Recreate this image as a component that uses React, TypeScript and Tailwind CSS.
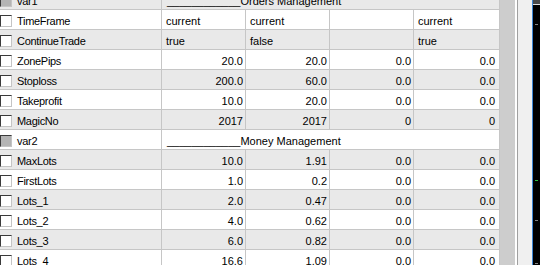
type Row =
    | { kind: "header"; name: string; title: string; shade: boolean }
    | { kind: "text" | "num"; name: string; values: string[]; shade: boolean };

const rows: Row[] = [
    { kind: "header", name: "var1", title: "____________Orders Management", shade: true },
    { kind: "text", name: "TimeFrame", values: ["current", "current", "", "current"], shade: false },
    { kind: "text", name: "ContinueTrade", values: ["true", "false", "", "true"], shade: true },
    { kind: "num", name: "ZonePips", values: ["20.0", "20.0", "0.0", "0.0"], shade: false },
    { kind: "num", name: "Stoploss", values: ["200.0", "60.0", "0.0", "0.0"], shade: true },
    { kind: "num", name: "Takeprofit", values: ["10.0", "20.0", "0.0", "0.0"], shade: false },
    { kind: "num", name: "MagicNo", values: ["2017", "2017", "0", "0"], shade: true },
    { kind: "header", name: "var2", title: "____________Money Management", shade: false },
    { kind: "num", name: "MaxLots", values: ["10.0", "1.91", "0.0", "0.0"], shade: true },
    { kind: "num", name: "FirstLots", values: ["1.0", "0.2", "0.0", "0.0"], shade: false },
    { kind: "num", name: "Lots_1", values: ["2.0", "0.47", "0.0", "0.0"], shade: true },
    { kind: "num", name: "Lots_2", values: ["4.0", "0.62", "0.0", "0.0"], shade: false },
    { kind: "num", name: "Lots_3", values: ["6.0", "0.82", "0.0", "0.0"], shade: true },
    { kind: "num", name: "Lots_4", values: ["16.6", "1.09", "0.0", "0.0"], shade: false },
];

function CheckBox({ disabled }: { disabled?: boolean }) {
    return (
        <span
            className={`mt-[5px] h-[12px] w-[12px] shrink-0 border-t border-l border-t-[#3a3a3a] border-l-[#3a3a3a] border-b border-r border-b-[#c4c4c4] border-r-[#c4c4c4] ${
                disabled ? "bg-[#b4b4b4]" : "bg-white"
            }`}
        />
    );
}

export default function App() {
    return (
        <div
            className="flex h-[265px] w-[540px] overflow-hidden bg-white text-[11px] text-black"
            style={{ fontFamily: '"Liberation Sans", Arial, sans-serif' }}
        >
            <div className="-mt-[10px] grid h-fit w-[500px] shrink-0 grid-cols-[162px_84px_84px_84px_86px]">
                {rows.map((row) => {
                    const bg = row.shade ? "bg-[#e9e9e9]" : "bg-white";
                    const cell = `h-[20px] border-b border-r border-[#c6c6c6] ${bg} leading-[15px] pt-[4px] whitespace-nowrap overflow-hidden`;
                    return (
                        <div key={row.name} className="contents">
                            <div className={`${cell} flex items-start gap-[5px] !pt-0`}>
                                <CheckBox disabled={row.kind === "header"} />
                                <span className="pt-[4px] tracking-[-0.3px]">{row.name}</span>
                            </div>
                            {row.kind === "header" ? (
                                <div className={`${cell} col-span-4 pl-[5px]`}>{row.title}</div>
                            ) : (
                                row.values.map((v, i) => (
                                    <div
                                        key={i}
                                        className={`${cell} ${
                                            row.kind === "num"
                                                ? `text-right ${i === 3 ? "pr-[4px]" : "pr-[2px]"}`
                                                : "pl-[4px]"
                                        }`}
                                    >
                                        {v}
                                    </div>
                                ))
                            )}
                        </div>
                    );
                })}
            </div>
            <div className="w-[15px] shrink-0 bg-[#cdcdcd]" />
            <div className="w-[2px] shrink-0 bg-white" />
            <div className="w-px shrink-0 bg-[#a0a0a0]" />
            <div className="w-[14px] shrink-0 bg-[#f0f0f0]" />
            <div className="w-px shrink-0 bg-[#3d86d4]" />
            <div className="flex flex-1 flex-col bg-black">
                <div className="h-[4px] bg-[#4a4a4a]" />
                <div className="h-px bg-[#e0e0e0]" />
                <div className="relative flex-1">
                    <span className="absolute left-[2px] top-[19px] h-px w-[3px] bg-[#808080]" />
                    <span className="absolute left-[2px] top-[175px] h-px w-[3px] bg-[#2fbf3f]" />
                    <span className="absolute left-[2px] top-[215px] h-px w-[3px] bg-[#808080]" />
                    <span className="absolute left-[2px] top-[258px] h-px w-[3px] bg-[#808080]" />
                </div>
            </div>
        </div>
    );
}
